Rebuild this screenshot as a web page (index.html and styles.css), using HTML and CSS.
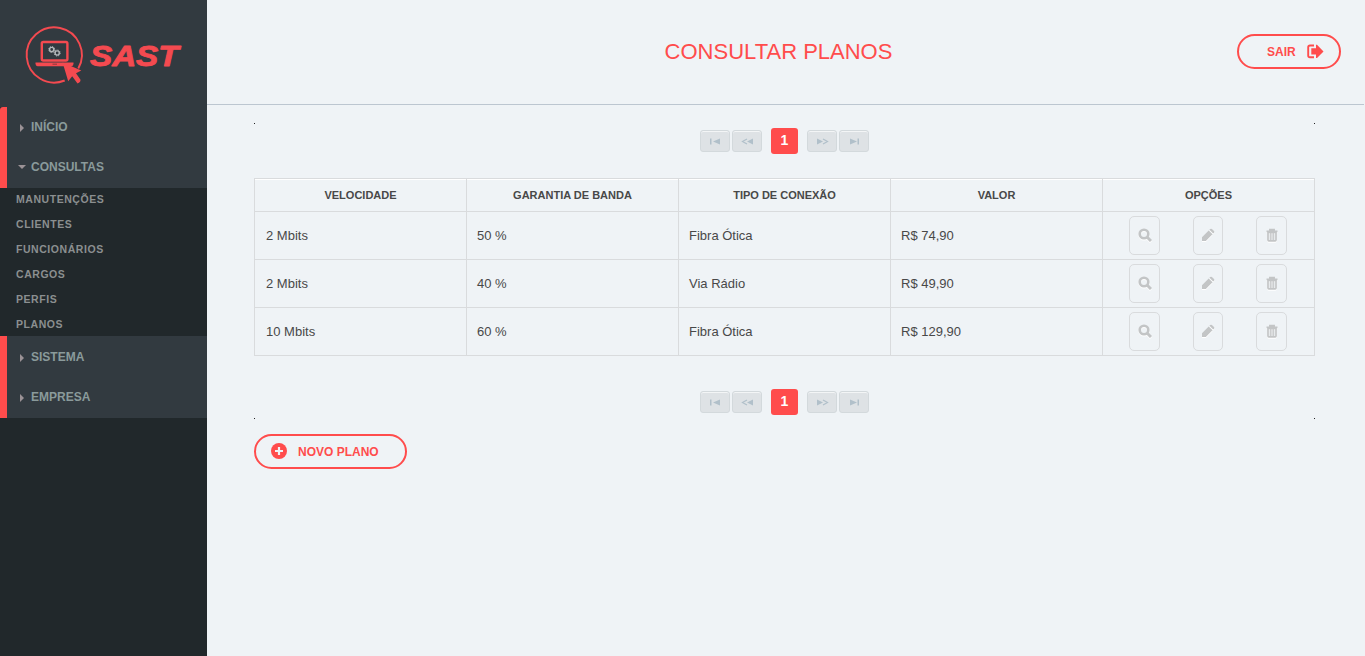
FILE: index.html
```html
<!DOCTYPE html>
<html lang="pt-BR">
<head>
<meta charset="utf-8">
<title>Consultar Planos</title>
<link rel="stylesheet" href="styles.css">
</head>
<body>
<svg class="defs" aria-hidden="true">
  <symbol id="search" viewBox="0 0 14 14"><circle cx="6" cy="6" r="4.300" fill="none" stroke="currentColor" stroke-width="2.600"/><path d="M9 9l4 4" stroke="currentColor" stroke-width="3"/></symbol>
  <symbol id="pencil" viewBox="0 0 14 14"><path d="M1 13V9.200L7.700 2.500l3.800 3.800L4.800 13zM8.400 1.800l.8-.8q.9-.7 1.700 0l2.100 2.100q.7.800 0 1.700l-.8.800z" fill="currentColor"/></symbol>
  <symbol id="trash" viewBox="0 0 14 14"><path d="M1.500 3.400h11M5 3V1.600h4V3" fill="none" stroke="currentColor" stroke-width="1.900"/><path d="M3 4.500h8V12q0 .8-.8.800H3.800Q3 12.800 3 12z" fill="none" stroke="currentColor" stroke-width="1.700"/><path d="M5.300 5v7M7 5v7M8.700 5v7" stroke="currentColor" stroke-width="1.100"/></symbol>
</svg>
<div class="app">
  <aside class="sidebar">
    <div class="brand">
      <svg width="207" height="107" viewBox="0 0 207 107">
        <g fill="none" stroke="#f44a50">
          <path d="M64.700 80.500A27.600 27.600 0 1 1 78.300 68.500" stroke-width="1.900"/>
          <rect x="41.800" y="42" width="25.600" height="18.500" rx="1.500" stroke-width="2.400"/>
        </g>
        <path d="M35.500 62.600h38v1.200q0 2.400-2 2.400h-34q-2 0-2-2.400z" fill="#f44a50"/>
        <path d="M52.500 64.200h4.500" stroke="#8f363c"/>
        <g fill="none" stroke="#b4b9bb">
          <circle cx="51.700" cy="49.500" r="2.100" stroke-width="1.400"/><circle cx="51.700" cy="49.500" r="3" stroke-dasharray="1.200 1.150"/>
          <circle cx="57.200" cy="53" r="2.100" stroke-width="1.400"/><circle cx="57.200" cy="53" r="3" stroke-dasharray="1.200 1.150"/>
        </g>
        <path d="M62.600 62.500L81.300 70.500l-5.300 2.700 4.500 6.600q.2 2.600-3 3.700l-5.300-7.200-4 4.900z" fill="#f44a50"/>
        <text class="wordmark" x="90" y="66" textLength="88.500" lengthAdjust="spacingAndGlyphs">SAST</text>
      </svg>
    </div>
    <nav>
      <div class="group first">
        <a class="item"><i class="caret"></i>INÍCIO</a>
        <a class="item"><i class="caret open"></i>CONSULTAS</a>
      </div>
      <div class="sub"><a>MANUTENÇÕES</a><a>CLIENTES</a><a>FUNCIONÁRIOS</a><a>CARGOS</a><a>PERFIS</a><a>PLANOS</a></div>
      <div class="group">
        <a class="item"><i class="caret"></i>SISTEMA</a>
        <a class="item"><i class="caret"></i>EMPRESA</a>
      </div>
    </nav>
  </aside>
  <main class="main">
    <header class="header">
      <h1>CONSULTAR PLANOS</h1>
      <button class="pill exit"><span>SAIR</span>
        <svg width="17" height="15" viewBox="0 0 17 15"><path d="M7 1.500H3Q1.200 1.500 1.200 3.300v8.200q0 1.800 1.800 1.800h4" fill="none" stroke="currentColor" stroke-width="1.900"/><path d="M4.300 4.300H9V.8h1L16.500 7.400 10 14H9v-3.500H4.300z" fill="currentColor"/></svg>
      </button>
    </header>
    <section class="content">
      <div class="dots top"><i></i><i></i></div>
      <div class="pager">
        <span class="pg"><svg width="14" height="9" viewBox="0 0 14 9"><path d="M2 1.500h1.500v6H2zM12 1.500v6L5 4.500z"/></svg></span>
        <span class="pg"><svg width="14" height="9" viewBox="0 0 14 9"><path d="M13 1.500v6L7 4.500z"/><path class="line" d="M7 2L2.500 4.500 7 7"/></svg></span>
        <b>1</b>
        <span class="pg"><svg width="14" height="9" viewBox="0 0 14 9"><path d="M2 1.500v6L8 4.500z"/><path class="line" d="M8 2l4.500 2.500L8 7"/></svg></span>
        <span class="pg"><svg width="14" height="9" viewBox="0 0 14 9"><path d="M3 1.500v6L10 4.500zM10.500 1.500H12v6h-1.500z"/></svg></span>
      </div>
      <table>
        <thead><tr><th>VELOCIDADE</th><th>GARANTIA DE BANDA</th><th>TIPO DE CONEXÃO</th><th>VALOR</th><th>OPÇÕES</th></tr></thead>
        <tbody>
          <tr><td>2 Mbits</td><td>50 %</td><td>Fibra Ótica</td><td>R$ 74,90</td><td><div class="ops"><button><svg><use href="#search"/></svg></button><button><svg><use href="#pencil"/></svg></button><button><svg><use href="#trash"/></svg></button></div></td></tr>
          <tr><td>2 Mbits</td><td>40 %</td><td>Via Rádio</td><td>R$ 49,90</td><td><div class="ops"><button><svg><use href="#search"/></svg></button><button><svg><use href="#pencil"/></svg></button><button><svg><use href="#trash"/></svg></button></div></td></tr>
          <tr><td>10 Mbits</td><td>60 %</td><td>Fibra Ótica</td><td>R$ 129,90</td><td><div class="ops"><button><svg><use href="#search"/></svg></button><button><svg><use href="#pencil"/></svg></button><button><svg><use href="#trash"/></svg></button></div></td></tr>
        </tbody>
      </table>
      <div class="pager">
        <span class="pg"><svg width="14" height="9" viewBox="0 0 14 9"><path d="M2 1.500h1.500v6H2zM12 1.500v6L5 4.500z"/></svg></span>
        <span class="pg"><svg width="14" height="9" viewBox="0 0 14 9"><path d="M13 1.500v6L7 4.500z"/><path class="line" d="M7 2L2.500 4.500 7 7"/></svg></span>
        <b>1</b>
        <span class="pg"><svg width="14" height="9" viewBox="0 0 14 9"><path d="M2 1.500v6L8 4.500z"/><path class="line" d="M8 2l4.500 2.500L8 7"/></svg></span>
        <span class="pg"><svg width="14" height="9" viewBox="0 0 14 9"><path d="M3 1.500v6L10 4.500zM10.500 1.500H12v6h-1.500z"/></svg></span>
      </div>
      <div class="dots bottom"><i></i><i></i></div>
      <button class="pill new">
        <svg width="16" height="16" viewBox="0 0 16 16"><circle cx="8" cy="8" r="8" fill="currentColor"/><path d="M8 4v8M4 8h8" stroke="#eff3f6" stroke-width="2.200"/></svg>
        NOVO PLANO
      </button>
    </section>
  </main>
</div>
</body>
</html>
```
FILE: styles.css
```css
* { box-sizing: border-box; }
body { margin: 0; background: #eff3f6; font-family: "Liberation Sans", Arial, sans-serif; color: #484848; }
.defs { position: absolute; width: 0; height: 0; }
.app { display: flex; height: 656px; overflow: hidden; }
.sidebar { width: 207px; flex: none; background: #21282b; }
.brand { height: 107px; background: #323a40; }
.brand svg { display: block; }
.wordmark { font: italic bold 29px "Liberation Sans", Arial, sans-serif; fill: #f44a50; stroke: #f44a50; stroke-width: .9; stroke-linejoin: round; }
.group { height: 82px; padding-top: 1px; background: #323a40; border-left: 7px solid #ff4c4c; }
.group.first { height: 81px; padding-top: 0; border-top-left-radius: 3px; }
.item { display: flex; align-items: center; height: 40px; font-size: 12px; font-weight: bold; color: #8a9a9b; }
.caret { flex: none; width: 4px; margin: 1px 7px 0 13px; border: solid transparent; border-width: 4px 0 4px 4px; border-left-color: #9b9296; }
.caret.open { width: 8px; margin: 0 5px 0 11px; border-width: 4px 4px 0; border-color: #9b9296 transparent transparent; }
.sub { display: flex; flex-direction: column; gap: 2px; height: 148px; padding-left: 16px; }
.sub a { height: 23px; line-height: 23px; font-size: 10.5px; font-weight: bold; letter-spacing: .55px; color: #8b8f90; }
.main { flex: 1; }
.header { display: grid; grid-template-columns: 1fr auto 1fr; align-items: center; height: 105px; margin-right: 1px; padding: 0 23px 2px 0; border-bottom: 1px solid #bcc6d0; }
h1 { grid-column: 2; margin: 2px 0 0 9px; font-size: 22px; line-height: 26px; font-weight: normal; color: #ff4c4c; }
.pill { display: flex; align-items: center; height: 35px; padding: 0; border: 2px solid #ff4c4c; border-radius: 18px; background: none; color: #ff4c4c; font: bold 12px "Liberation Sans", Arial, sans-serif; }
.exit { grid-column: 3; justify-self: end; width: 104px; padding-left: 28px; gap: 11px; }
.exit span { padding-top: 1px; }
.content { padding: 0 50px 0 47px; }
.dots { display: flex; justify-content: space-between; }
.dots i { width: 1px; height: 1px; background: #222; }
.top { margin: 18px 0 4px; }
.bottom { margin: 3px 0 15px; }
.pager { display: flex; align-items: center; justify-content: center; gap: 2px; height: 26px; }
.pg { display: flex; align-items: center; justify-content: center; width: 30px; height: 22px; border: 1px solid #d3d9dc; border-radius: 3px; background: #dee2e5; box-shadow: inset 0 1px #f3f5f6; }
.pg svg { margin-top: 1px; fill: #b1c0ca; }
.pg .line { fill: none; stroke: #b1c0ca; stroke-width: 1.2; }
.pager b { width: 27px; height: 26px; margin: 0 7px; border-radius: 3px; background: #ff4c4c; color: #fff; font-size: 14px; line-height: 25px; text-align: center; }
table { width: 1061px; margin: 24px 0 33px; border-collapse: collapse; table-layout: fixed; }
th, td { border: 1px solid #d9dbdd; padding: 0; }
th { height: 33px; font-size: 11px; box-shadow: inset 0 1px #fff; }
td { height: 48px; padding: 0 0 0 10px; font-size: 13px; }
td:first-child { padding-left: 11px; }
td:last-child { padding: 0; }
.ops { display: flex; justify-content: center; gap: 33px; padding: 0 1px 1px 0; }
.ops button { display: flex; align-items: center; justify-content: center; width: 30.5px; height: 39px; padding: 0; border: 1px solid #d9dbdd; border-radius: 5px; background: none; color: #c3c5c6; }
.ops svg { width: 14px; height: 14px; filter: drop-shadow(0 1px #fff); }
.new { width: 153px; padding-left: 15px; gap: 11px; }
.new svg { margin-top: -2px; }
```
